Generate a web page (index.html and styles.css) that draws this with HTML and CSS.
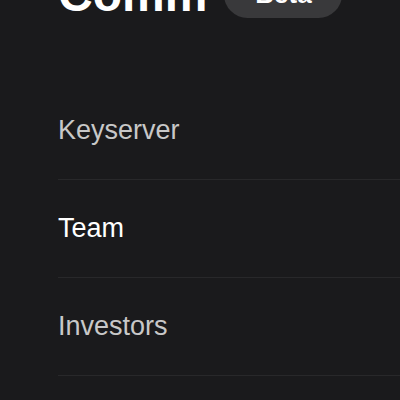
FILE: index.html
```html
<!DOCTYPE html>
<html lang="en">
<head>
<meta charset="UTF-8">
<meta name="viewport" content="width=device-width, initial-scale=1.0">
<title>Comm</title>
<link rel="stylesheet" href="styles.css">
</head>
<body>

<div class="container">
    <div class="header">
        <h1>Comm</h1>
        <span class="badge">Beta</span>
    </div>

    <ul class="menu">
        <li><a href="#">Keyserver</a></li>
        <li class="active"><a href="#">Team</a></li>
        <li><a href="#">Investors</a></li>
    </ul>
</div>

</body>
</html>
```

FILE: styles.css
```css
body {
    font-family: "Liberation Sans", Arial, sans-serif;
    background-color: #1a1a1c;
    margin: 0;
    padding: 0;
}
.container {
    padding-left: 58px;
}
.header {
    display: flex;
    align-items: center;
    gap: 17px;
    margin-top: -33px;
    height: 55px;
}
h1 {
    color: #fff;
    font-size: 48px;
    line-height: 55px;
    font-weight: bold;
    margin: 0;
}
.badge {
    background-color: #39393b;
    color: #fff;
    font-size: 26px;
    font-weight: bold;
    padding: 8px 30px 8px 31px;
    border-radius: 999px;
}
.menu {
    list-style: none;
    margin: 60px 0 0;
    padding: 0;
}
.menu li {
    padding: 33px 0;
    border-bottom: 1px solid #28282a;
}
.menu a {
    color: #c8c8c8;
    font-size: 27px;
    line-height: 31px;
    text-decoration: none;
    display: block;
}
.menu li.active a {
    color: #fff;
}
```
